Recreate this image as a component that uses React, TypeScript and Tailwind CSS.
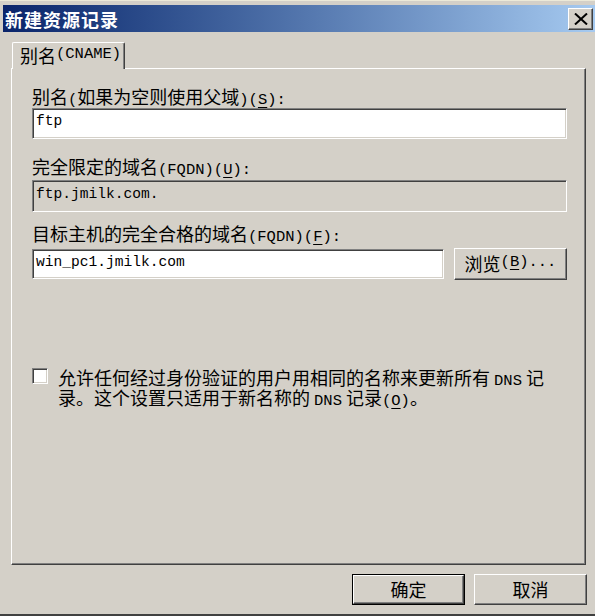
import React from 'react'

// classic 3D borders
const sunken =
  'border border-t-[#808080] border-l-[#808080] border-r-white border-b-white shadow-[inset_1px_1px_0_#404040,inset_-1px_-1px_0_#d4d0c8]'
const raised =
  'border border-t-white border-l-white border-r-[#404040] border-b-[#404040] shadow-[inset_-1px_-1px_0_#808080]'

function M({ children }: { children: React.ReactNode }) {
  return <span className="font-['Liberation_Mono',monospace] text-[15.5px]">{children}</span>
}

function U({ children }: { children: React.ReactNode }) {
  return <span className="underline underline-offset-[3px]">{children}</span>
}

function Field({ value, disabled }: { value: string; disabled?: boolean }) {
  return (
    <div
      className={`h-full flex items-center pl-[3px] pb-[3px] font-['Liberation_Mono',monospace] text-[14.6px] ${
        disabled ? 'bg-[#d4d0c8]' : 'bg-white'
      } ${sunken}`}
    >
      {value}
    </div>
  )
}

export default function App() {
  return (
    <div className="w-[595px] h-[616px] bg-[#d4d0c8] flex flex-col pt-[4px] pl-[3px] border-t border-t-[#ece9d8] border-b-2 border-b-[#404040] font-['Noto_Sans_CJK_SC',sans-serif] text-black overflow-hidden">
      {/* title bar */}
      <div className="h-[27px] shrink-0 flex items-center justify-between bg-linear-to-r from-[#0a246a] to-[#a6caf0] pl-[2px] pr-[2px]">
        <span className="text-white font-bold text-[18px] leading-none tracking-[1px]">新建资源记录</span>
        <div className={`w-[25px] h-[22px] bg-[#d4d0c8] flex items-center justify-center ${raised}`}>
          <svg width="14" height="12" viewBox="0 0 14 12">
            <path d="M1 0.5 L13 11.5 M13 0.5 L1 11.5" stroke="#000" strokeWidth="2" />
          </svg>
        </div>
      </div>

      <div className="flex flex-col pl-[8px] pt-[10px]">
        {/* tab */}
        <div className="relative z-10 ml-[1px] -mb-px w-[113px] h-[27px] bg-[#d4d0c8] border-t border-l border-t-white border-l-white border-r border-r-[#404040] shadow-[inset_-1px_0_0_#808080] rounded-t-[2px] pl-[7px] flex items-center text-[18px] leading-none pb-[2px]">
          别名<M>(CNAME)</M>
        </div>

        {/* panel */}
        <div className="w-[575px] h-[497px] border border-t-white border-l-white border-r-[#404040] border-b-[#404040] shadow-[inset_-1px_-1px_0_#808080] pl-[20px] pt-[18px] flex flex-col">
          <div className="h-[18px] text-[18px] leading-[18px]">
            别名<M>(</M>如果为空则使用父域<M>)(<U>S</U>):</M>
          </div>
          <div className="mt-[3px] w-[535px] h-[31px]">
            <Field value="ftp" />
          </div>

          <div className="mt-[18px] h-[18px] text-[18px] leading-[18px]">
            完全限定的域名<M>(FQDN)(<U>U</U>):</M>
          </div>
          <div className="mt-[5px] w-[535px] h-[32px]">
            <Field value="ftp.jmilk.com." disabled />
          </div>

          <div className="mt-[12px] h-[18px] text-[18px] leading-[18px]">
            目标主机的完全合格的域名<M>(FQDN)(<U>F</U>):</M>
          </div>
          <div className="mt-[6px] flex items-center w-[535px] h-[32px] gap-[10px]">
            <div className="w-[412px] h-[30px]">
              <Field value="win_pc1.jmilk.com" />
            </div>
            <div className={`w-[113px] h-[32px] flex items-center justify-center text-[18px] leading-none pb-[2px] ${raised}`}>
              浏览<M>(<U>B</U>)...</M>
            </div>
          </div>

          <div className="mt-[89px] flex items-start gap-[10px]">
            <div className={`mt-[-1px] w-[16px] h-[16px] shrink-0 bg-white ${sunken}`} />
            <div className="text-[18px] leading-[16px]">
              允许任何经过身份验证的用户用相同的名称来更新所有 <M>DNS</M> 记
              <br />
              录。这个设置只适用于新名称的 <M>DNS</M> 记录<M>(<U>O</U>)</M>。
            </div>
          </div>
        </div>
      </div>

      {/* dialog buttons */}
      <div className="mt-[9px] flex justify-end gap-[9px] pr-[8px]">
        <div className="w-[113px] h-[31px] border border-black">
          <div className={`w-full h-full flex items-center justify-center text-[18px] leading-none pb-[2px] ${raised}`}>
            确定
          </div>
        </div>
        <div className={`w-[113px] h-[31px] flex items-center justify-center text-[18px] leading-none pb-[2px] ${raised}`}>
          取消
        </div>
      </div>
    </div>
  )
}
